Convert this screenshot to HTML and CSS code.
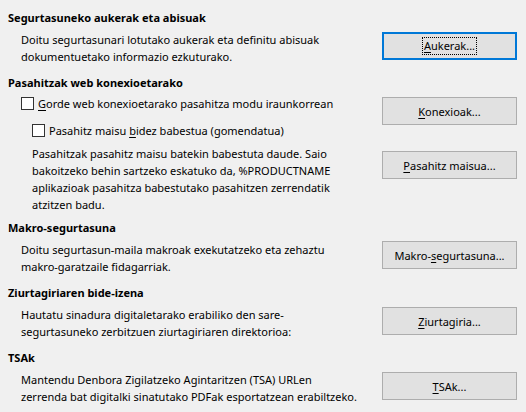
FILE: index.html
```html
<!DOCTYPE html>
<html>
<head>
<meta charset="utf-8">
<link rel="stylesheet" href="styles.css">
</head>
<body>
<div class="page">
  <section class="sec sec1">
    <div class="heading">Segurtasuneko aukerak eta abisuak</div>
    <div class="row">
      <div class="desc">Doitu segurtasunari lotutako aukerak eta definitu abisuak<br>dokumentuetako informazio ezkuturako.</div>
      <button class="btn focused b1"><span class="focus"><u>A</u>ukerak...</span></button>
    </div>
  </section>

  <section class="sec sec2">
    <div class="heading">Pasahitzak web konexioetarako</div>
    <div class="row">
      <div class="checks">
        <label class="check"><span class="box"></span><span><u>G</u>orde web konexioetarako pasahitza modu iraunkorrean</span></label>
        <label class="check sub"><span class="box"></span><span>Pasahitz maisu <u>b</u>idez babestua (gomendatua)</span></label>
      </div>
      <button class="btn b2"><u>K</u>onexioak...</button>
    </div>
    <div class="row">
      <div class="desc para">Pasahitzak pasahitz maisu batekin babestuta daude. Saio<br>bakoitzeko behin sartzeko eskatuko da, %PRODUCTNAME<br>aplikazioak pasahitza babestutako pasahitzen zerrendatik<br>atzitzen badu.</div>
      <button class="btn b3"><u>P</u>asahitz maisua...</button>
    </div>
  </section>

  <section class="sec sec3">
    <div class="heading">Makro-segurtasuna</div>
    <div class="row">
      <div class="desc">Doitu segurtasun-maila makroak exekutatzeko eta zehaztu<br>makro-garatzaile fidagarriak.</div>
      <button class="btn b4">Makro-<u>s</u>egurtasuna...</button>
    </div>
  </section>

  <section class="sec sec4">
    <div class="heading">Ziurtagiriaren bide-izena</div>
    <div class="row">
      <div class="desc">Hautatu sinadura digitaletarako erabiliko den sare-<br>segurtasuneko zerbitzuen ziurtagiriaren direktorioa:</div>
      <button class="btn b5"><u>Z</u>iurtagiria...</button>
    </div>
  </section>

  <section class="sec sec5">
    <div class="heading">TSAk</div>
    <div class="row">
      <div class="desc">Mantendu Denbora Zigilatzeko Agintaritzen (TSA) URLen<br>zerrenda bat digitalki sinatutako PDFak esportatzean erabiltzeko.</div>
      <button class="btn b6"><u>T</u>SAk...</button>
    </div>
  </section>
</div>
</body>
</html>
```

FILE: styles.css
```css
html, body {
  margin: 0;
  padding: 0;
  background: #f0f0f0;
}
body {
  width: 526px;
  height: 412px;
  overflow: hidden;
  font-family: "Noto Sans", "Open Sans", sans-serif;
  font-size: 11px;
  line-height: 17px;
  color: #000;
}
.page {
  padding: 9px 9px 0 8px;
  display: flex;
  flex-direction: column;
}
.heading {
  font-weight: bold;
  height: 17px;
}
.row {
  display: flex;
  justify-content: space-between;
  align-items: flex-start;
  padding-left: 13px;
}
.desc {
  white-space: nowrap;
}
.btn {
  box-sizing: border-box;
  width: 135px;
  height: 28px;
  background: #e1e1e1;
  border: 1px solid #adadad;
  border-radius: 0;
  padding: 0;
  font: inherit;
  color: #000;
  display: flex;
  align-items: center;
  justify-content: center;
  flex-shrink: 0;
}
.btn.focused {
  border: 2px solid #0078d7;
}
.focus {
  outline: 1px dotted #000;
  outline-offset: 0;
  padding: 0 1px;
  line-height: 16px;
}
u {
  text-decoration-thickness: 1px;
  text-underline-offset: 2px;
}
.sec1 .row { margin-top: 5px; }
.b1 { margin-top: 1px; }
.sec2 { margin-top: 9px; }
.checks {
  display: flex;
  flex-direction: column;
  gap: 10px;
  margin-top: 4px;
}
.check {
  display: flex;
  align-items: center;
  gap: 4px;
  height: 17px;
}
.check.sub { margin-left: 11px; }
.box {
  box-sizing: border-box;
  width: 13px;
  height: 13px;
  border: 1px solid #333;
  background: #fff;
}
.b2 { margin-top: 6px; }
.para { margin-left: 11px; margin-top: 6px; }
.b3 { margin-top: 12px; }
.sec3 { margin-top: 6px; }
.sec3 .row { margin-top: 5px; }
.b4 { margin-top: 0px; }
.sec4 { margin-top: 9px; }
.sec4 .row { margin-top: 5px; }
.b5 { margin-top: 1px; }
.sec5 { margin-top: 9px; }
.sec5 .row { margin-top: 5px; }
.b6 { margin-top: 1px; }
```
